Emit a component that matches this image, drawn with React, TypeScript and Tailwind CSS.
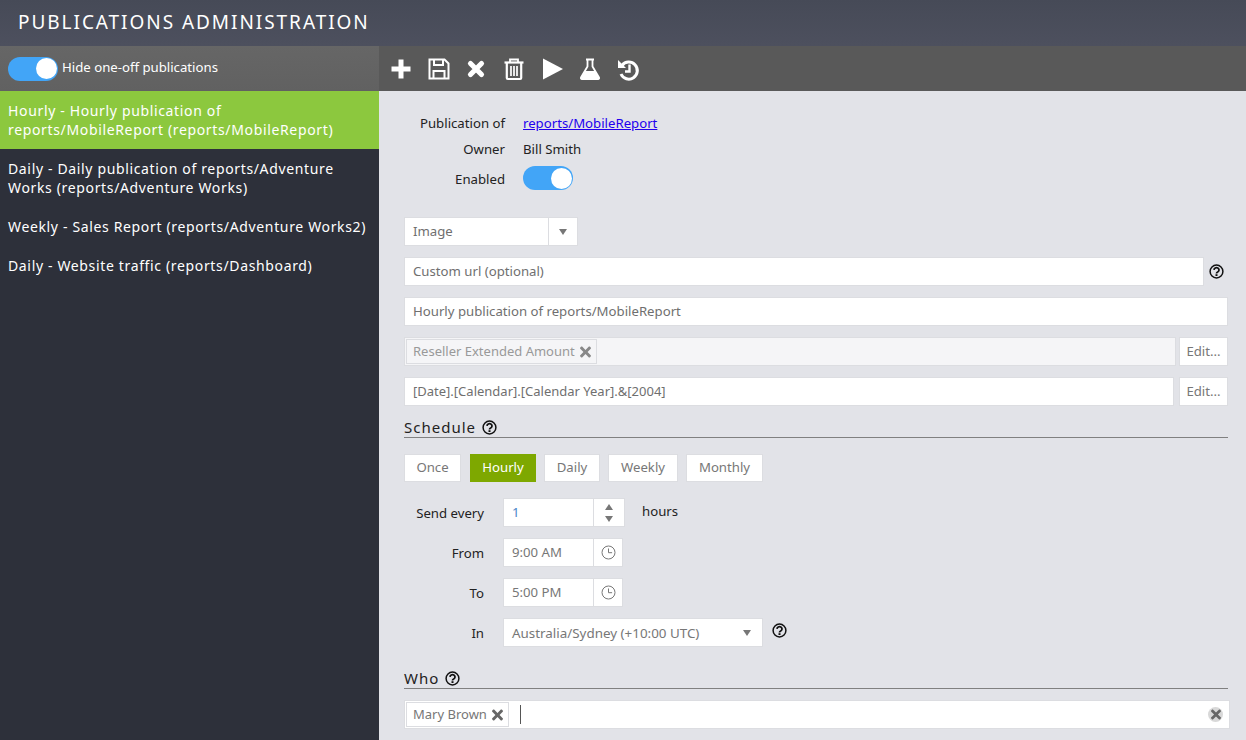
import { FaTimes } from "react-icons/fa";

const publications = [
  { text: "Hourly - Hourly publication of reports/MobileReport (reports/MobileReport)", active: true },
  { text: "Daily - Daily publication of reports/Adventure Works (reports/Adventure Works)" },
  { text: "Weekly - Sales Report (reports/Adventure Works2)" },
  { text: "Daily - Website traffic (reports/Dashboard)" },
];

const scheduleTabs = [
  { label: "Once", width: "mr-[1px] w-[57px]" },
  { label: "Hourly", width: "w-[66px]" },
  { label: "Daily", width: "w-[56px]" },
  { label: "Weekly", width: "w-[70px]" },
  { label: "Monthly", width: "w-[77px]" },
];

function Toggle() {
  return (
    <div className="flex h-6 w-[50px] shrink-0 items-center justify-end rounded-full bg-[#42a5f7] pr-[1px]">
      <div className="h-[21px] w-[21px] rounded-full bg-white" />
    </div>
  );
}

function Help() {
  return (
    <svg width="15" height="15" viewBox="0 0 15 15" className="shrink-0 text-[#111]">
      <circle cx="7.5" cy="7.5" r="6.4" fill="none" stroke="currentColor" strokeWidth="1.5" />
      <path d="M5 5.9a2.5 2.3 0 1 1 3.7 2.1c-.8.4-1.2.7-1.2 1.5" fill="none" stroke="currentColor" strokeWidth="1.8" />
      <rect x="6.5" y="10.2" width="2" height="1.8" fill="currentColor" />
    </svg>
  );
}

function Clock() {
  return (
    <svg width="15" height="15" viewBox="0 0 15 15" className="text-[#777]">
      <circle cx="7.5" cy="7.5" r="6.5" fill="none" stroke="currentColor" strokeWidth="1" />
      <path d="M7.5 3.5v4.2h3.6" fill="none" stroke="currentColor" strokeWidth="1" />
    </svg>
  );
}

function Caret({ className = "" }: { className?: string }) {
  return (
    <div
      className={`h-0 w-0 border-x-[4px] border-t-[6px] border-x-transparent border-t-[#777] ${className}`}
    />
  );
}

function ToolIcon({ children, className = "" }: { children: React.ReactNode; className?: string }) {
  return (
    <svg
      width="22"
      height="22"
      viewBox="0 0 22 22"
      fill="none"
      stroke="currentColor"
      className={`shrink-0 overflow-visible ${className}`}
    >
      {children}
    </svg>
  );
}

function Toolbar() {
  return (
    <div className="flex h-[45px] items-center gap-[15.5px] bg-[#595959] pl-[11px] text-white">
      <ToolIcon>
        <path d="M8.5 1.5h5v7h7v5h-7v7h-5v-7h-7v-5h7z" fill="currentColor" stroke="none" />
      </ToolIcon>
      <ToolIcon>
        <path d="M1.5 1.5h15l4 4v15h-19z" strokeWidth="2" />
        <path d="M6 1.5v5.5h9V1.5M5.5 20.5v-7.5h11v7.5" strokeWidth="2" />
      </ToolIcon>
      <ToolIcon>
        <path d="M5.5 5.5l11 11M16.5 5.5l-11 11" strokeWidth="5.2" strokeLinecap="round" />
      </ToolIcon>
      <ToolIcon>
        <path d="M1.5 4.5h19" strokeWidth="2.2" />
        <path d="M7 4V1.5h8V4" strokeWidth="1.8" />
        <path d="M3.8 5v15a1 1 0 0 0 1 1h12.4a1 1 0 0 0 1-1V5" strokeWidth="2.2" />
        <path d="M8 8v10M11 8v10M14 8v10" strokeWidth="1.7" />
      </ToolIcon>
      <ToolIcon className="ml-[1.5px]">
        <path d="M1 .5L21 11 1 21.5z" fill="currentColor" stroke="none" />
      </ToolIcon>
      <ToolIcon>
        <path d="M7 1.5h8M8.5 1.5v7L2 19.5a1 1 0 0 0 .9 1.5h16.2a1 1 0 0 0 .9-1.5L13.5 8.5v-7" strokeWidth="1.8" />
        <path d="M6 13h10l4.5 8h-19z" fill="currentColor" stroke="none" />
      </ToolIcon>
      <ToolIcon>
        <path d="M5 7.5A8.5 8.5 0 1 1 4 16" strokeWidth="3" />
        <path d="M1 2v8h8z" fill="currentColor" stroke="none" />
        <path d="M12.5 6.5v7H8" strokeWidth="2.4" />
      </ToolIcon>
    </div>
  );
}

function Field({ children, className = "" }: { children: React.ReactNode; className?: string }) {
  return (
    <div
      className={`flex h-[29px] items-center border border-[#dcdde1] bg-white px-2 pt-[1px] text-[#6f6f6f] ${className}`}
    >
      {children}
    </div>
  );
}

function EditButton() {
  return (
    <div className="flex h-[29px] w-[49px] shrink-0 items-center justify-center border border-[#dcdde1] bg-white text-[#777]">
      Edit...
    </div>
  );
}

function Chip({ label, muted }: { label: string; muted?: boolean }) {
  return (
    <div
      className={`flex h-[25px] items-center gap-[5px] border border-[#dcdde1] pl-[6px] pr-[5px] text-[13px] ${
        muted ? "text-[#999]" : "bg-white text-[#777]"
      }`}
    >
      {label}
      <FaTimes className={`h-[16px] w-[11px] ${muted ? "text-[#888]" : "text-[#666]"}`} />
    </div>
  );
}

function SectionTitle({ title }: { title: string }) {
  return (
    <div className="flex h-[21px] items-center gap-[6px] border-b border-[#808080] text-[15px] tracking-[1px] text-[#222]">
      {title}
      <Help />
    </div>
  );
}

function TimeRow({ label, value }: { label: string; value: string }) {
  return (
    <div className="flex h-[29px] items-center">
      <div className="w-[80px] pt-[3px] text-right text-[#222]">{label}</div>
      <div className="ml-[19px] flex h-[29px] w-[120px] border border-[#dcdde1] bg-white text-[#777]">
        <div className="flex flex-1 items-center pl-2 pt-[1px]">{value}</div>
        <div className="flex w-[29px] items-center justify-center border-l border-[#dcdde1]">
          <Clock />
        </div>
      </div>
    </div>
  );
}

export default function App() {
  return (
    <div className="flex h-[740px] w-[1246px] flex-col overflow-hidden font-['Noto_Sans',sans-serif] text-[13.2px]">
      <header className="flex h-[46px] shrink-0 items-center bg-gradient-to-b from-[#464a57] to-[#4d505e] pb-[2px] pl-[18px] text-[19px] tracking-[1.95px] text-white">
        PUBLICATIONS ADMINISTRATION
      </header>
      <div className="flex min-h-0 flex-1">
        <aside className="w-[379px] shrink-0 bg-[#2d303a]">
          <div className="flex h-[45px] items-center gap-[4px] bg-gradient-to-b from-[#666666] to-[#616161] pl-2 text-white">
            <Toggle />
            <span className="-mt-[2px]">Hide one-off publications</span>
          </div>
          {publications.map((p) => (
            <div
              key={p.text}
              className={`px-2 py-[10px] text-[14px] leading-[19px] tracking-[0.65px] text-white ${
                p.active ? "bg-[#8cc83e]" : ""
              }`}
            >
              {p.text}
            </div>
          ))}
        </aside>
        <main className="min-w-0 flex-1 bg-[#e2e3e8]">
          <Toolbar />
          <div className="pl-[25px] pr-[18px] pt-[19px]">
            <div className="grid grid-cols-[101px_1fr] items-center gap-x-[18px] text-[#222]">
              <div className="flex h-[26px] items-center justify-end pt-[1px]">Publication of</div>
              <div className="flex h-[26px] items-center pt-[1px]">
                <a href="#" className="text-[#2200ee] underline">
                  reports/MobileReport
                </a>
              </div>
              <div className="flex h-[26px] items-center justify-end pt-[1px]">Owner</div>
              <div className="flex h-[26px] items-center pt-[1px]">Bill Smith</div>
              <div className="flex h-[32px] items-center justify-end pt-[3px]">Enabled</div>
              <div className="flex h-[32px] items-center">
                <Toggle />
              </div>
            </div>

            <div className="mt-[23px] flex flex-col gap-[11px]">
              <div className="flex h-[29px] w-[174px] border border-[#dcdde1] bg-white text-[#6f6f6f]">
                <div className="flex flex-1 items-center pl-2 pt-[1px]">Image</div>
                <div className="flex w-[29px] items-center justify-center border-l border-[#dcdde1]">
                  <Caret />
                </div>
              </div>
              <div className="flex items-center gap-[5px]">
                <Field className="flex-1">Custom url (optional)</Field>
                <div className="mr-[4px]">
                  <Help />
                </div>
              </div>
              <Field>Hourly publication of reports/MobileReport</Field>
              <div className="flex gap-[3px]">
                <Field className="flex-1 !bg-[#f5f5f7] !pl-[1px] !pt-0">
                  <Chip label="Reseller Extended Amount" muted />
                </Field>
                <EditButton />
              </div>
              <div className="flex gap-[5px]">
                <Field className="flex-1 text-[13px]">[Date].[Calendar].[Calendar Year].&amp;[2004]</Field>
                <EditButton />
              </div>
            </div>

            <div className="mt-[11px]">
              <SectionTitle title="Schedule" />
            </div>
            <div className="mt-[16px] flex gap-[8px]">
              {scheduleTabs.map((s) => (
                <div
                  key={s.label}
                  className={`flex h-[28px] items-center justify-center border ${s.width} ${
                    s.label === "Hourly"
                      ? "border-[#7ea800] bg-[#7ea800] text-white"
                      : "border-[#dcdde1] bg-white text-[#777]"
                  }`}
                >
                  {s.label}
                </div>
              ))}
            </div>

            <div className="mt-[16px] flex flex-col gap-[11px]">
              <div className="flex h-[29px] items-center">
                <div className="w-[80px] pt-[3px] text-right text-[#222]">Send every</div>
                <div className="ml-[19px] flex h-[29px] w-[122px] border border-[#dcdde1] bg-white text-[#4a86c8]">
                  <div className="flex flex-1 items-center pl-2 pt-[1px]">1</div>
                  <div className="flex w-[31px] flex-col items-center justify-center gap-[6px] border-l border-[#dcdde1]">
                    <Caret className="rotate-180" />
                    <Caret />
                  </div>
                </div>
                <div className="ml-[17px] pb-[2px] text-[#222]">hours</div>
              </div>
              <TimeRow label="From" value="9:00 AM" />
              <TimeRow label="To" value="5:00 PM" />
              <div className="flex h-[29px] items-center">
                <div className="w-[80px] pt-[3px] text-right text-[#222]">In</div>
                <div className="ml-[19px] flex h-[29px] w-[260px] items-center justify-between border border-[#dcdde1] bg-white pl-2 pr-[11px] text-[#777]">
                  <span className="pt-[1px] text-[13.4px]">Australia/Sydney (+10:00 UTC)</span>
                  <Caret />
                </div>
                <div className="ml-[9px] pb-[5px]">
                  <Help />
                </div>
              </div>
            </div>

            <div className="mt-[21px]">
              <SectionTitle title="Who" />
            </div>
            <div className="-mr-[2px] mt-[11px] flex h-[29px] items-center border border-[#dcdde1] bg-white pl-[1px] pr-[6px]">
              <Chip label="Mary Brown" />
              <div className="ml-[11px] h-[19px] w-px bg-[#555]" />
              <div className="ml-auto flex h-[15px] w-[15px] items-center justify-center rounded-full bg-[#d8d8d8]">
                <FaTimes className="h-[15px] w-[10px] text-[#666]" />
              </div>
            </div>
          </div>
        </main>
      </div>
    </div>
  );
}
